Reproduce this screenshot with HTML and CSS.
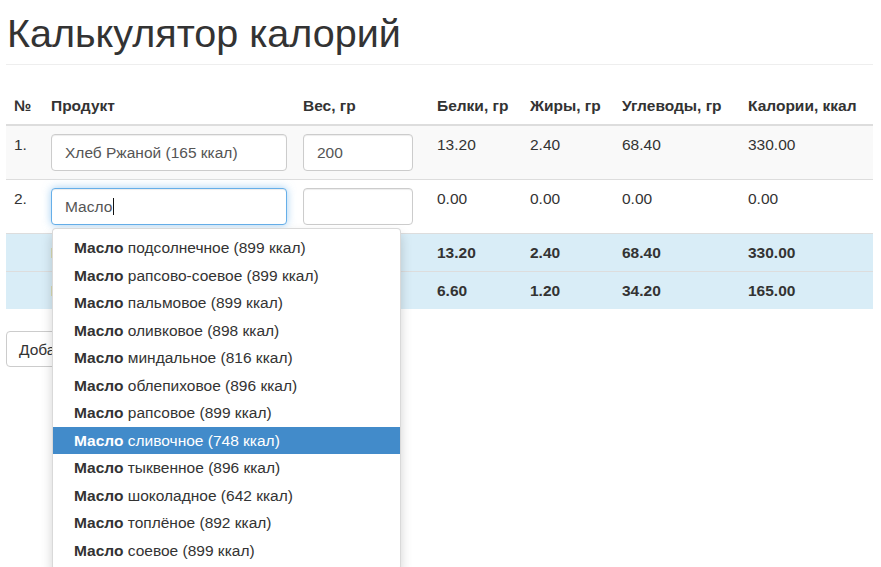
FILE: index.html
```html
<!DOCTYPE html>
<html lang="ru">
<head>
<meta charset="utf-8">
<title>Калькулятор калорий</title>
<link rel="stylesheet" href="styles.css">
</head>
<body>
<div class="container">
  <div class="page-header">
    <h1>Калькулятор калорий</h1>
  </div>

  <table class="calc">
    <thead>
      <tr>
        <th class="c-num">№</th>
        <th class="c-prod">Продукт</th>
        <th class="c-weight">Вес, гр</th>
        <th class="c-prot">Белки, гр</th>
        <th class="c-fat">Жиры, гр</th>
        <th class="c-carb">Углеводы, гр</th>
        <th class="c-kcal">Калории, ккал</th>
      </tr>
    </thead>
    <tbody>
      <tr class="striped first">
        <td>1.</td>
        <td><div class="field field-prod">Хлеб Ржаной (165 ккал)</div></td>
        <td><div class="field field-weight">200</div></td>
        <td>13.20</td>
        <td>2.40</td>
        <td>68.40</td>
        <td>330.00</td>
      </tr>
      <tr>
        <td>2.</td>
        <td>
          <div class="typeahead">
            <div class="field field-prod focused">Масло<span class="caret-line"></span></div>
            <ul class="dropdown">
              <li><b>Масло</b> подсолнечное (899 ккал)</li>
              <li><b>Масло</b> рапсово-соевое (899 ккал)</li>
              <li><b>Масло</b> пальмовое (899 ккал)</li>
              <li><b>Масло</b> оливковое (898 ккал)</li>
              <li><b>Масло</b> миндальное (816 ккал)</li>
              <li><b>Масло</b> облепиховое (896 ккал)</li>
              <li><b>Масло</b> рапсовое (899 ккал)</li>
              <li class="active"><b>Масло</b> сливочное (748 ккал)</li>
              <li><b>Масло</b> тыквенное (896 ккал)</li>
              <li><b>Масло</b> шоколадное (642 ккал)</li>
              <li><b>Масло</b> топлёное (892 ккал)</li>
              <li><b>Масло</b> соевое (899 ккал)</li>
            </ul>
          </div>
        </td>
        <td><div class="field field-weight"></div></td>
        <td>0.00</td>
        <td>0.00</td>
        <td>0.00</td>
        <td>0.00</td>
      </tr>
      <tr class="info">
        <td></td>
        <td>Итого:</td>
        <td></td>
        <td>13.20</td>
        <td>2.40</td>
        <td>68.40</td>
        <td>330.00</td>
      </tr>
      <tr class="info">
        <td></td>
        <td>На 100 гр:</td>
        <td></td>
        <td>6.60</td>
        <td>1.20</td>
        <td>34.20</td>
        <td>165.00</td>
      </tr>
    </tbody>
  </table>

  <button class="btn" type="button">Добавить продукт</button>
</div>
</body>
</html>
```
FILE: styles.css
```css
* {
  box-sizing: border-box;
}

html,
body {
  min-height: 567px;
}

body {
  margin: 0;
  font-family: "Liberation Sans", Arial, Helvetica, sans-serif;
  font-size: 15.5px;
  line-height: 21px;
  color: #333;
  background: #fff;
}

.container {
  padding: 0 8px 0 6px;
  min-height: 567px;
}

.page-header {
  margin: 0 0 22px;
  padding-bottom: 9px;
  border-bottom: 1px solid #eee;
}

.page-header h1 {
  margin: 12px 0 0 1px;
  font-size: 39.5px;
  line-height: 43px;
  font-weight: 400;
  color: #333;
}

.calc {
  width: 867px;
  table-layout: fixed;
  border-collapse: separate;
  border-spacing: 0;
  margin-bottom: 22px;
}

.calc th,
.calc td {
  padding: 8px;
  text-align: left;
  vertical-align: top;
  line-height: 21px;
}

.calc th {
  font-weight: 700;
  border-bottom: 2px solid #ddd;
  vertical-align: bottom;
}

.calc td {
  border-top: 1px solid #ddd;
}

.calc tr.first td {
  border-top: 0;
}

.c-num { width: 37px; }
.c-prod { width: 252px; }
.c-weight { width: 134px; }
.c-prot { width: 93px; }
.c-fat { width: 92px; }
.c-carb { width: 126px; }
.c-kcal { width: 133px; }

.calc tr.striped td {
  background: #f9f9f9;
}

.calc tr.info td {
  background: #d9edf7;
  font-weight: 700;
}

.field {
  display: flex;
  align-items: center;
  height: 37px;
  padding: 0 13px;
  border: 1px solid #ccc;
  border-radius: 4px;
  background: #fff;
  color: #555;
  font-size: 15.5px;
  box-shadow: inset 0 1px 1px rgba(0, 0, 0, 0.075);
  white-space: nowrap;
}

.field-prod {
  width: 236px;
}

.field-weight {
  width: 110px;
}

.field.focused {
  border-color: #66afe9;
  box-shadow: inset 0 1px 1px rgba(0, 0, 0, 0.075), 0 0 8px rgba(102, 175, 233, 0.6);
}

.caret-line {
  display: inline-block;
  width: 1px;
  height: 17px;
  margin-left: 1px;
  background: #111;
}

.typeahead {
  position: relative;
}

.dropdown {
  position: absolute;
  top: 100%;
  left: 1px;
  z-index: 10;
  width: 349px;
  margin: 3px 0 0;
  padding: 5px 0;
  list-style: none;
  background: #fff;
  border: 1px solid rgba(0, 0, 0, 0.15);
  border-radius: 4px;
  box-shadow: 0 6px 12px rgba(0, 0, 0, 0.175);
  font-weight: 400;
}

.dropdown li {
  padding: 3px 21px;
  line-height: 21.5px;
  color: #333;
  white-space: nowrap;
}

.dropdown li b {
  font-weight: 700;
}

.dropdown li.active {
  background: #428bca;
  color: #fff;
}

.btn {
  display: inline-block;
  height: 36px;
  padding: 6px 12px;
  font-family: inherit;
  font-size: 15.5px;
  line-height: 21px;
  color: #333;
  background: #fff;
  border: 1px solid #ccc;
  border-radius: 4px;
  cursor: pointer;
}
```
